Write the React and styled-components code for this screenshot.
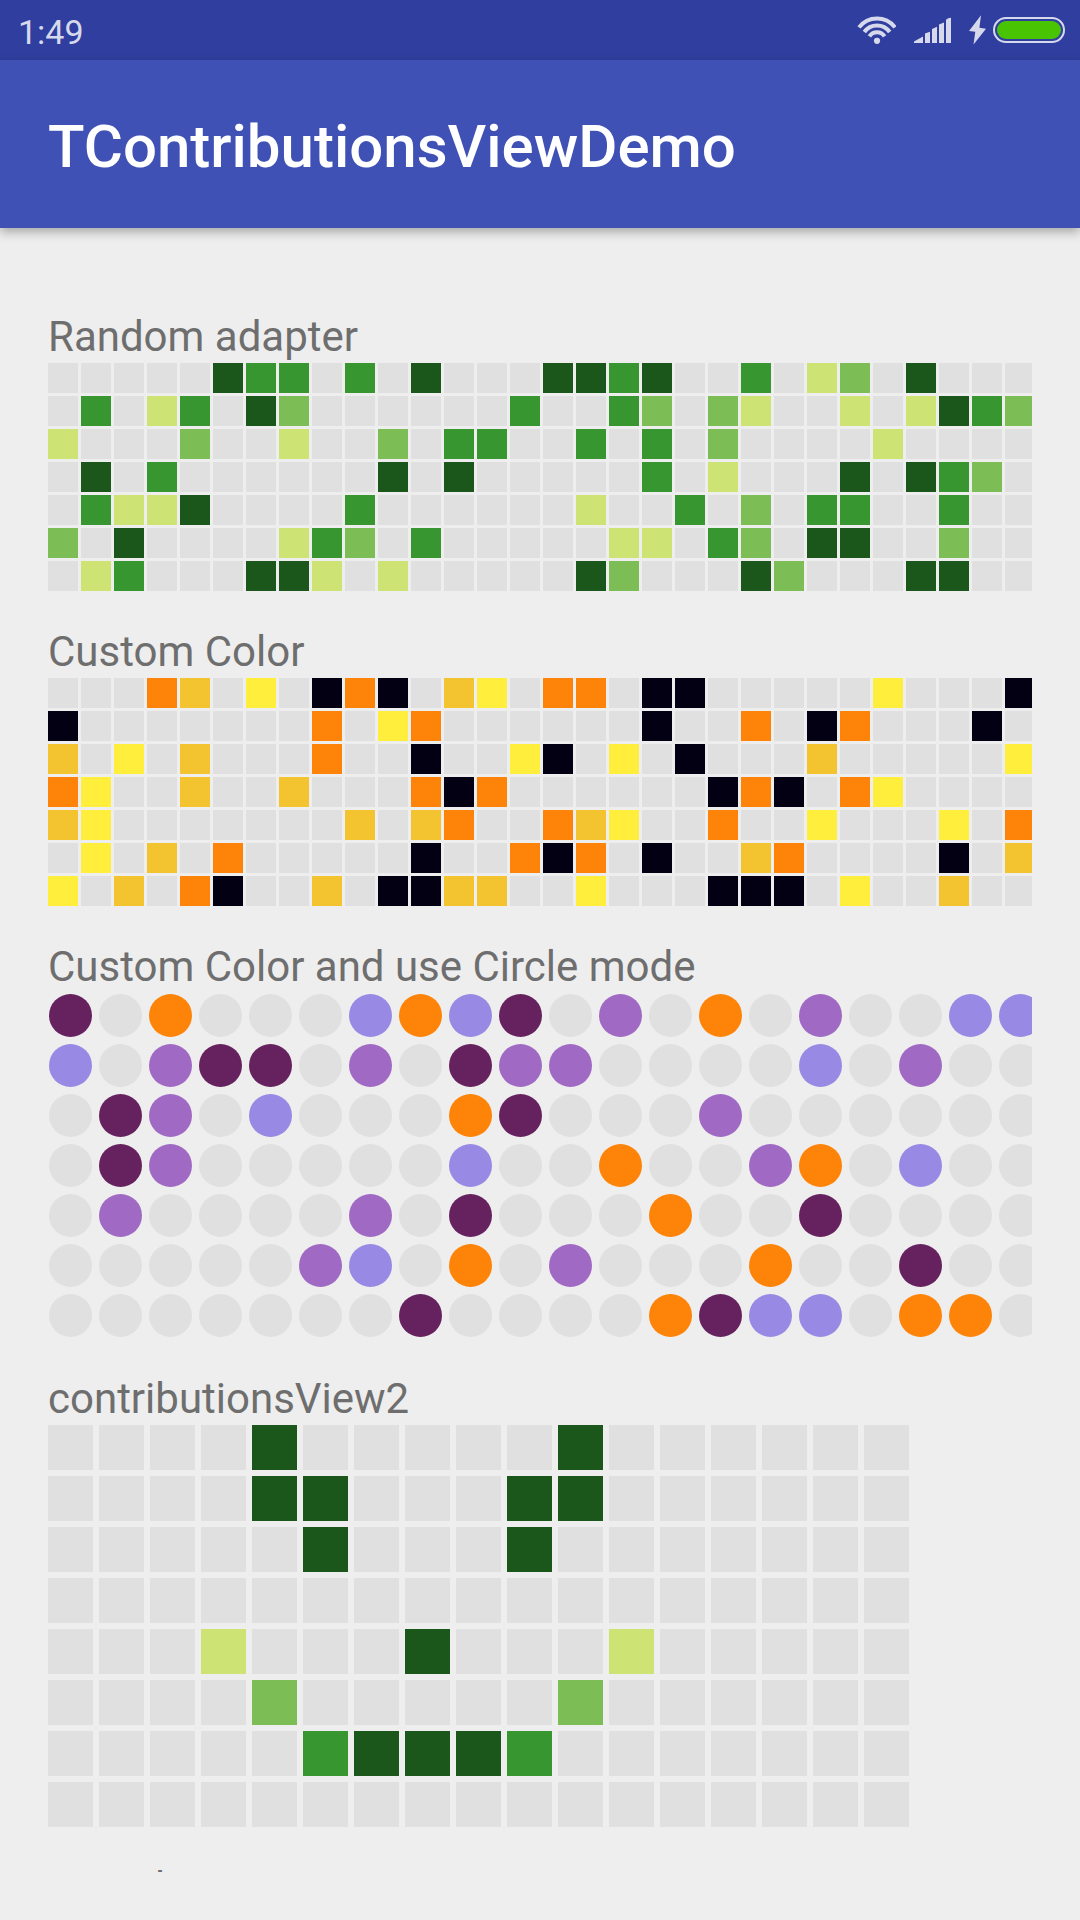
import React from "react";
import styled, { createGlobalStyle } from "styled-components";

const GlobalStyle = createGlobalStyle`
  *, *::before, *::after { box-sizing: border-box; }
  body {
    margin: 0;
    background: #eeeeee;
    font-family: Roboto, "Liberation Sans", sans-serif;
  }
`;

const Screen = styled.div`
  display: flex;
  flex-direction: column;
  height: 100vh;
  overflow: hidden;
`;

const StatusBar = styled.div`
  flex: none;
  display: flex;
  align-items: center;
  justify-content: space-between;
  height: 60px;
  padding: 0 15px 0 18px;
  background: #303f9f;
  color: #d6d9ec;
`;

const Clock = styled.time`
  padding-top: 4px;
  font-size: 34px;
  line-height: 40px;
`;

const StatusIcons = styled.div`
  display: flex;
  align-items: center;
  gap: 18px;
`;

const PowerState = styled.div`
  display: flex;
  align-items: center;
  gap: 7px;
`;

const Battery = styled.div`
  width: 72px;
  height: 26px;
  padding: 2px;
  border: 2px solid #d6d9ec;
  border-radius: 13px;
`;

const BatteryCharge = styled.div`
  height: 100%;
  border-radius: 9px;
  background: #49c402;
`;

const AppBar = styled.header`
  flex: none;
  display: flex;
  align-items: center;
  height: 168px;
  padding: 6px 48px 0;
  background: #3f51b5;
  box-shadow: 0 4px 10px rgba(0, 0, 0, 0.3);
`;

const Title = styled.h1`
  margin: 0;
  color: #ffffff;
  font-size: 60px;
  font-weight: 500;
  line-height: 70px;
`;

const Content = styled.main`
  flex: 1;
  min-height: 0;
  margin: 48px;
  overflow: hidden;
`;

const Section = styled.section`
  padding-top: 34px;
`;

const Label = styled.h2`
  margin: 0;
  color: #6e6e6e;
  font-size: 42px;
  font-weight: 400;
  line-height: 53px;
`;

const Grid = styled.div`
  display: grid;
  grid-template-columns: repeat(${(p) => p.$columns}, ${(p) => p.$cell}px);
  grid-auto-rows: ${(p) => p.$cell}px;
  gap: ${(p) => p.$gap}px;
  overflow: hidden;
`;

const Cell = styled.span`
  background: ${(p) => p.$color};
`;

const Dot = styled(Cell)`
  border: 1px solid transparent;
  border-radius: 50%;
  background-clip: padding-box;
`;

const EMPTY = "#e0e0e0";
const GREENS = [EMPTY, "#cde474", "#7dbd55", "#389630", "#1b571b"];
const AMBERS = [EMPTY, "#ffee3b", "#f4c430", "#fd8408", "#030014"];
const PURPLES = [EMPTY, "#988ae4", "#a06ac4", "#fd8408", "#66215f"];

/* One string per weekday row; a digit is the contribution level, a dot is none. */
const SECTIONS = [
  {
    label: "Random adapter",
    palette: GREENS,
    cell: 30,
    gap: 3,
    rows: [
      ".....433.3.4...4434..3.12.4...",
      ".3.13.42......3..32.21..1.1432",
      "1...2..1..2.33..3.3.2....1....",
      ".4.3......4.4.....3.1...4.432.",
      ".3114....3......1..3.2.33..3..",
      "2.4....132.3.....11.32.44..2..",
      ".13...441.1.....42...42...44..",
    ],
  },
  {
    label: "Custom Color",
    palette: AMBERS,
    cell: 30,
    gap: 3,
    rows: [
      "...32.1.434.21.33.44.....1...4",
      "4.......3.13......4..3.43...4.",
      "2.1.2...3..4..14.1.4...2.....1",
      "31..2..2...343......434.31....",
      "21.......2.23..321..3..1...1.3",
      ".1.2.3.....4..343.4..23....4.2",
      "1.2.34..2.4422..1...444.1..2..",
    ],
  },
  {
    label: "Custom Color and use Circle mode",
    palette: PURPLES,
    cell: 45,
    gap: 5,
    circle: true,
    rows: [
      "4.3...1314.2.3.2..11",
      "1.244.2.422....1.2..",
      ".42.1...34...2......",
      ".42.....1..3..23.1..",
      ".2....2.4...3..4....",
      ".....21.3.2...3..4..",
      ".......4....3411.33.",
    ],
  },
  {
    label: "contributionsView2",
    palette: GREENS,
    cell: 45,
    gap: 6,
    rows: [
      "....4.....4......",
      "....44...44......",
      ".....4...4.......",
      ".................",
      "...1...4...1.....",
      "....2.....2......",
      ".....34443.......",
      ".................",
    ],
  },
  { label: "contributionsView3" },
];

function ContributionsGrid({ rows, palette, cell, gap, circle }) {
  const Item = circle ? Dot : Cell;
  return (
    <Grid $columns={rows[0].length} $cell={cell} $gap={gap}>
      {rows.flatMap((row, y) =>
        [...row].map((level, x) => (
          <Item key={`${y}-${x}`} $color={palette[Number(level) || 0]} />
        ))
      )}
    </Grid>
  );
}

function WifiIcon() {
  return (
    <svg width="39" height="28" viewBox="0 0 39 28" aria-hidden="true">
      <g fill="none" stroke="currentColor" strokeWidth="4">
        <path d="M2 11.4A22.6 22.6 0 0 1 38 11.4" />
        <path d="M7.3 16A15.6 15.6 0 0 1 32.7 16" />
        <path d="M12.4 20.4A8.9 8.9 0 0 1 27.6 20.4" />
      </g>
      <circle cx="20" cy="24.8" r="3.1" fill="currentColor" />
    </svg>
  );
}

function SignalIcon() {
  return (
    <svg width="37" height="26" viewBox="0 0 37 26" fill="currentColor" aria-hidden="true">
      <path d="M0 24.4L9 19.5V26H0ZM11 16.5L16 14.8V26H11ZM18 12L23 9.8V26H18ZM25 7.5L30 5.5V26H25ZM32 2.8Q34 .8 37 .8V26H32Z" />
    </svg>
  );
}

function BoltIcon() {
  return (
    <svg width="17" height="30" viewBox="0 0 17 30" fill="currentColor" aria-hidden="true">
      <path d="M12 .3L0 16L6.3 16.8L4.5 29.6L17 13.8L10.4 12.8Z" />
    </svg>
  );
}

export default function App() {
  return (
    <>
      <GlobalStyle />
      <Screen>
        <StatusBar>
          <Clock>1:49</Clock>
          <StatusIcons>
            <WifiIcon />
            <SignalIcon />
            <PowerState>
              <BoltIcon />
              <Battery>
                <BatteryCharge />
              </Battery>
            </PowerState>
          </StatusIcons>
        </StatusBar>
        <AppBar>
          <Title>TContributionsViewDemo</Title>
        </AppBar>
        <Content>
          {SECTIONS.map(({ label, ...grid }) => (
            <Section key={label}>
              <Label>{label}</Label>
              {grid.rows && <ContributionsGrid {...grid} />}
            </Section>
          ))}
        </Content>
      </Screen>
    </>
  );
}
